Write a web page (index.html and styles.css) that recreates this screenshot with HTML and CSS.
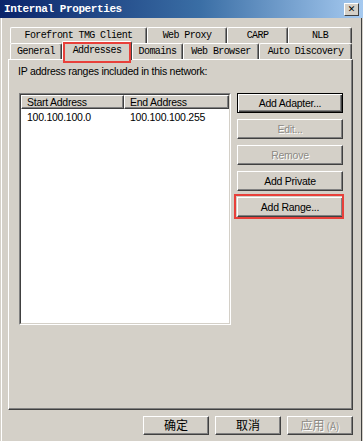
FILE: index.html
```html
<!DOCTYPE html>
<html lang="zh-CN">
<head>
  <meta charset="UTF-8">
  <title>Internal Properties</title>
  <link rel="stylesheet" href="styles.css">
</head>
<body>
  <div class="title-bar">
    <span class="title">Internal Properties</span>
    <span class="close-btn">✕</span>
  </div>
  <div class="client">
    <div class="tabs">
      <div class="tab-row">
        <div class="tab t-forefront">Forefront TMG Client</div>
        <div class="tab t-proxy">Web Proxy</div>
        <div class="tab t-carp">CARP</div>
        <div class="tab t-nlb">NLB</div>
      </div>
      <div class="tab-row">
        <div class="tab t-general">General</div>
        <div class="tab t-addresses active">Addresses</div>
        <div class="tab t-domains">Domains</div>
        <div class="tab t-browser">Web Browser</div>
        <div class="tab t-discovery">Auto Discovery</div>
      </div>
    </div>

    <div class="panel">
      <div class="intro">IP address ranges included in this network:</div>
      <div class="content">
        <div class="list">
          <div class="list-inner">
            <div class="list-head">
              <div class="col-head col-start">Start Address</div>
              <div class="col-head col-end">End Address</div>
            </div>
            <div class="list-row">
              <div class="cell col-start">100.100.100.0</div>
              <div class="cell col-end">100.100.100.255</div>
            </div>
          </div>
        </div>
        <div class="buttons">
          <div class="btn default">Add Adapter...</div>
          <div class="btn disabled">Edit...</div>
          <div class="btn disabled">Remove</div>
          <div class="btn">Add Private</div>
          <div class="btn marked">Add Range...</div>
        </div>
      </div>
    </div>

    <div class="footer">
      <div class="btn dlg-btn">确定</div>
      <div class="btn dlg-btn">取消</div>
      <div class="btn dlg-btn disabled">应用<span class="accel">(A)</span></div>
    </div>
  </div>
</body>
</html>
```

FILE: styles.css
```css
body { margin: 0; width: 363px; height: 441px; overflow: hidden; background: #d4d0c8; color: #000; font-family: "Liberation Sans", Arial, sans-serif; font-size: 10.5px; letter-spacing: -0.25px; }

.title-bar {
  height: 18px;
  display: flex;
  align-items: center;
  justify-content: space-between;
  padding: 0 4px 0 4px;
  background: linear-gradient(to right, #0a246a, #3a6ea5 55%, #a6caf0);
}
.title { font: bold 11px "Liberation Mono", monospace; letter-spacing: -0.4px; color: #fff; }
.close-btn {
  width: 15px;
  height: 13px;
  box-sizing: border-box;
  background: #d4d0c8;
  border: 1px solid;
  border-color: #fff #404040 #404040 #fff;
  font: bold 9px "DejaVu Sans", sans-serif;
  line-height: 11px;
  letter-spacing: 0;
  text-align: center;
}

.client { height: 423px; margin-left: 1px; width: 359px; border-left: 1px solid #fff; border-right: 1px solid #404040; }

/* tabs */
.tabs { padding: 9px 0 0 8px; }
.tab-row { display: flex; height: 16px; }
.tab {
  box-sizing: border-box;
  height: 16px;
  border-top: 1px solid #fff;
  border-left: 1px solid #fff;
  border-right: 1px solid #404040;
  box-shadow: inset -1px 0 #808080;
  border-radius: 2px 2px 0 0;
  text-align: center;
  font: 10px "Liberation Mono", monospace;
  letter-spacing: -0.6px;
  line-height: 15px;
  white-space: nowrap;
}
.t-forefront { width: 137px; }
.t-proxy { width: 80px; }
.t-carp { width: 61px; }
.t-nlb { width: 64px; }
.t-general { width: 52px; }
.t-addresses { width: 70px; }
.t-domains { width: 51px; }
.t-browser { width: 76px; }
.t-discovery { width: 93px; }
.tab.active {
  position: relative;
  z-index: 2;
  height: 19px;
  margin-top: -2px;
  background: #d4d0c8;
  line-height: 17px;
}
.tab.active::after {
  content: "";
  position: absolute;
  left: 0;
  right: 0;
  top: 0;
  bottom: -3px;
  border: 2px solid #e8403a;
}

/* panel */
.panel {
  box-sizing: border-box;
  width: 345px;
  height: 351px;
  margin-left: 6px;
  padding: 5px 9px 0 9px;
  border: 1px solid;
  border-color: #fff #404040 #404040 #fff;
  box-shadow: inset -1px -1px #808080;
}
.intro { line-height: 13px; }
.content { display: flex; gap: 6px; margin-top: 15px; padding-left: 1px; }

.list { width: 212px; height: 232px; box-sizing: border-box; border: 1px solid; border-color: #808080 #fff #fff #808080; }
.list-inner { height: 100%; box-sizing: border-box; background: #fff; border: 1px solid; border-color: #404040 #d4d0c8 #d4d0c8 #404040; }
.list-head { display: flex; height: 14px; }
.col-head {
  box-sizing: border-box;
  background: #d4d0c8;
  border: 1px solid;
  border-color: #fff #404040 #404040 #fff;
  box-shadow: inset -1px -1px #808080;
  padding-left: 5px;
  line-height: 12px;
}
.col-start { width: 104px; }
.col-end { width: 106px; }
.list-row { display: flex; padding-top: 2px; line-height: 13px; }
.cell { padding-left: 6px; box-sizing: border-box; }

/* buttons */
.buttons { display: flex; flex-direction: column; gap: 6px; width: 106px; }
.btn {
  position: relative;
  box-sizing: border-box;
  height: 20px;
  background: #d4d0c8;
  border: 1px solid;
  border-color: #fff #404040 #404040 #fff;
  box-shadow: inset -1px -1px #808080;
  text-align: center;
  line-height: 18px;
}
.btn.default { border-color: #000; box-shadow: inset 1px 1px #fff, inset -1px -1px #404040, inset -2px -2px #808080; }
.btn.disabled { color: #8c8a85; text-shadow: 1px 1px #fff; }
.btn.marked::after {
  content: "";
  position: absolute;
  left: -4px;
  right: -2px;
  top: -4px;
  bottom: -3px;
  border: 2px solid #e8403a;
}

.footer { display: flex; justify-content: flex-end; gap: 6px; width: 345px; margin: 6px 0 0 6px; }
.dlg-btn { width: 66px; height: 19px; font: 12px "Noto Sans CJK SC", sans-serif; letter-spacing: 0; line-height: 16px; }
.accel { font-size: 10px; margin-left: 2px; }
```
